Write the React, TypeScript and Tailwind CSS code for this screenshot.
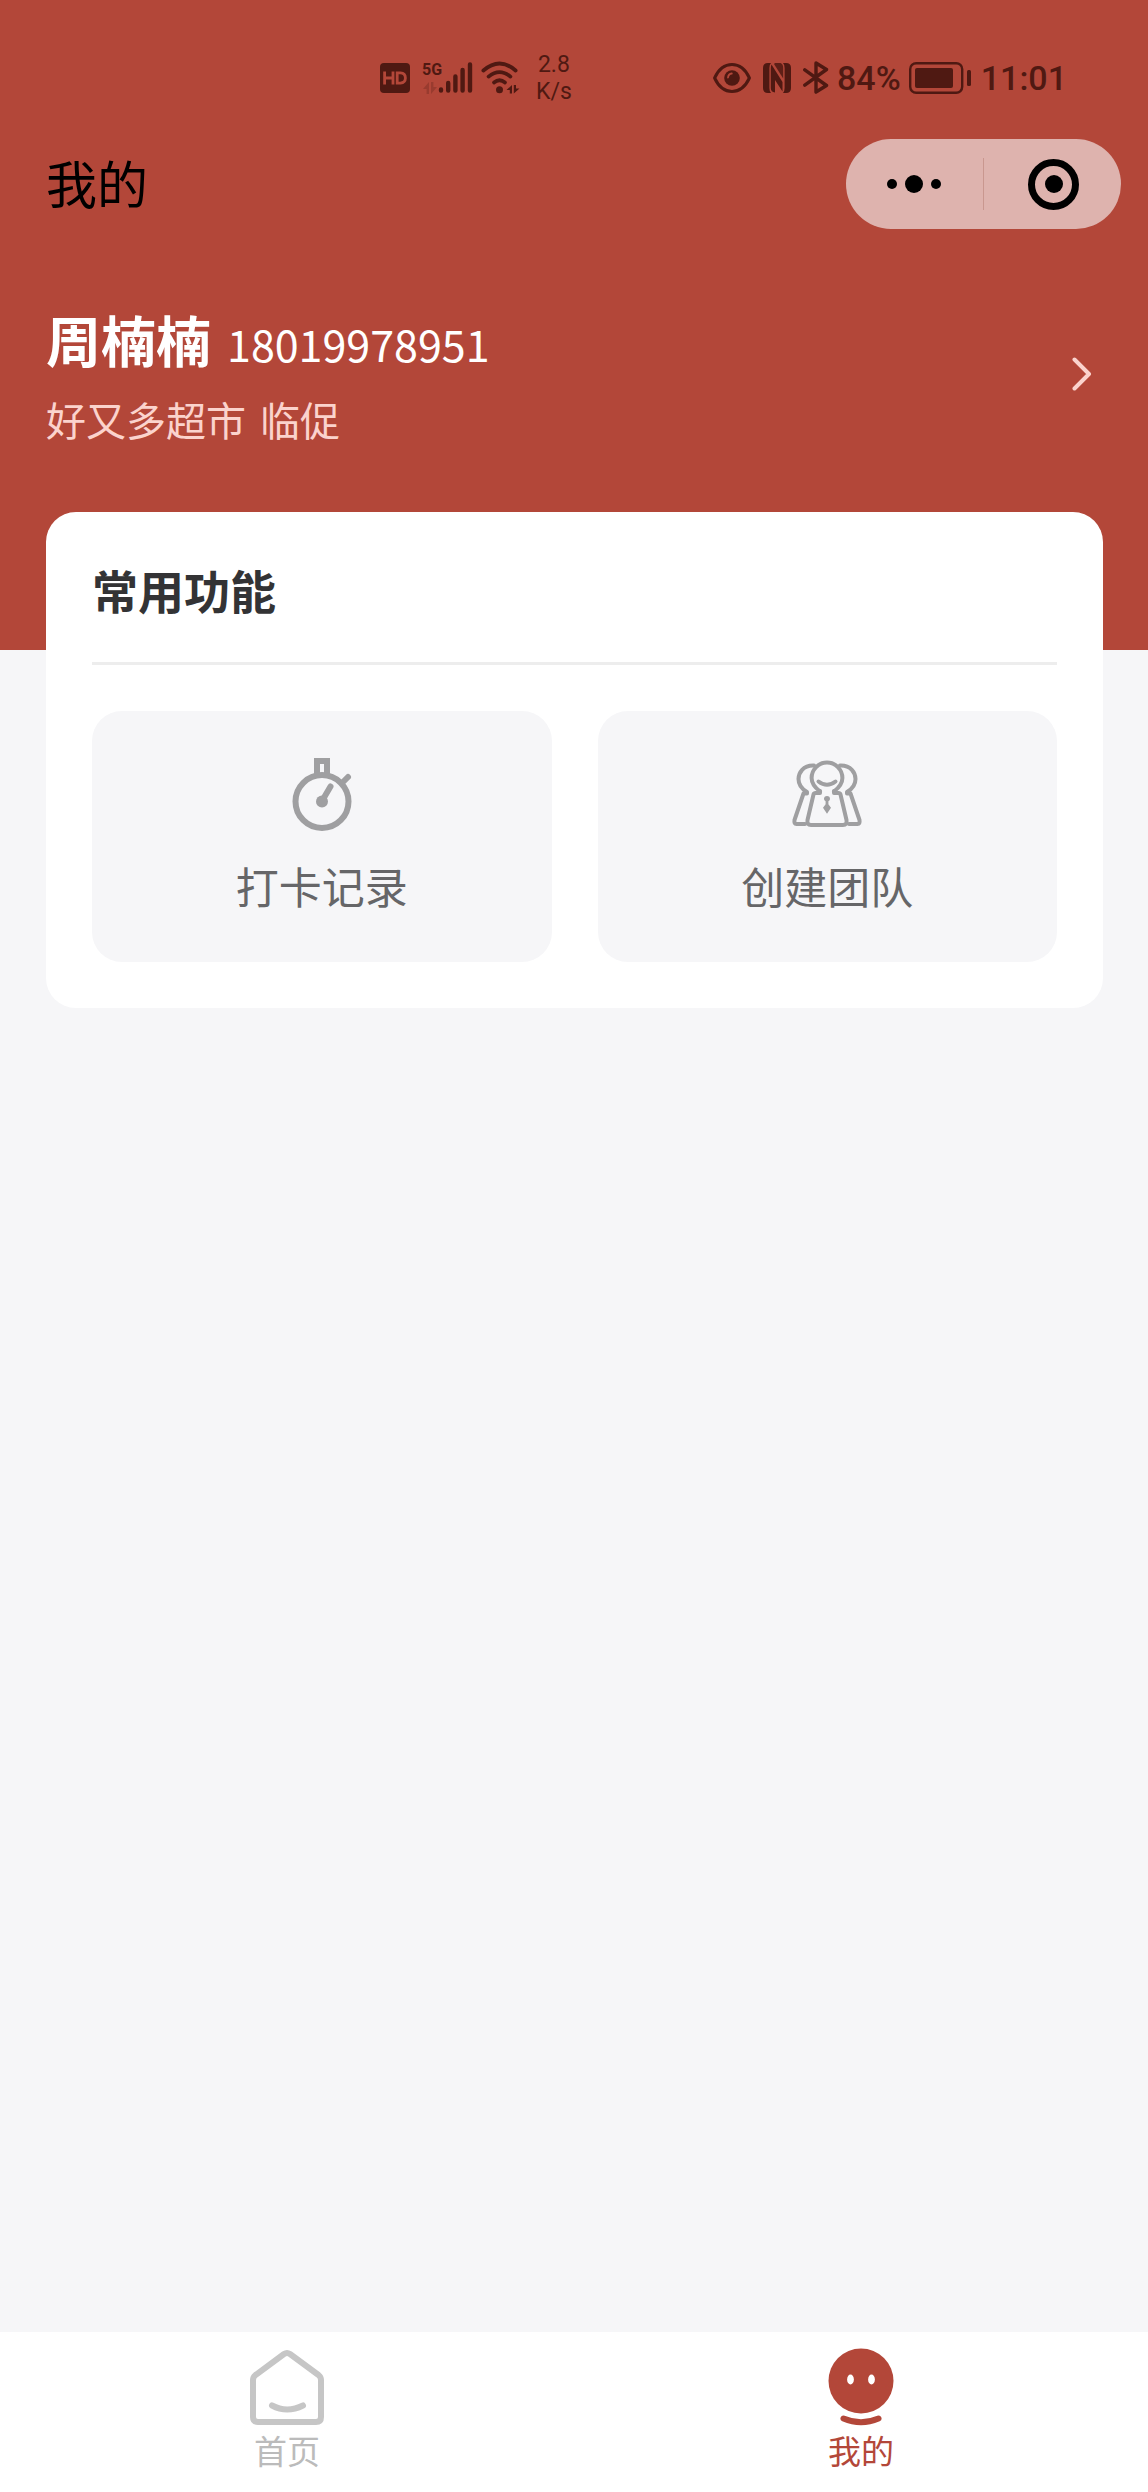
import { FC, ReactNode } from 'react';

type IconProps = { className?: string };

const HdIcon: FC = () => (
  <svg className="h-[30px] w-[30px]" viewBox="0 0 30 30" aria-hidden="true">
    <rect width="30" height="30" rx="4" fill="currentColor" />
    <g fill="none" stroke="#b34739" strokeWidth="2.8">
      <path d="M4.6 8.5v13M13 8.5v13M4.6 15H13" />
      <path d="M17.2 9.9v10.2h3.2q5-.4 5-5.1t-5-5.1z" />
    </g>
  </svg>
);

const SignalIcon: FC = () => (
  <svg className="h-[33px] w-[35px]" viewBox="0 0 35 33" aria-hidden="true">
    <g stroke="currentColor" strokeWidth="4.4" strokeLinecap="round">
      <path d="M3 29.5v-1M10.2 29.5v-7.5M17.4 29.5v-14M24.6 29.5v-20.5M32 29.5v-26" />
    </g>
  </svg>
);

const DataArrows: FC<IconProps> = ({ className }) => (
  <svg className={className} viewBox="0 0 14 12" fill="currentColor" aria-hidden="true">
    <path d="M6 0v12H3.6V7H0z" />
    <path d="M8 12V0h2.4v5H14z" />
  </svg>
);

const WifiIcon: FC = () => (
  <svg className="h-[33px] w-[39px]" viewBox="0 0 39 33" aria-hidden="true">
    <g fill="none" stroke="currentColor" strokeWidth="3.8" strokeLinecap="round">
      <path d="M2.4 9.5Q18.5-4.6 34.6 9.5" />
      <path d="M7.6 15.6Q18.5 6.6 29.4 15.6" />
      <path d="M13 21.4Q18.5 17.2 24 21.4" />
    </g>
    <circle cx="18.5" cy="28.8" r="3.5" fill="currentColor" />
    <path d="M31 24v8.5h-2.2V29h-3.3zM32.8 32.5V24H35v3.5h3.5z" fill="currentColor" />
  </svg>
);

const EyeIcon: FC = () => (
  <svg className="h-[30px] w-[38px]" viewBox="0 0 38 30" aria-hidden="true">
    <path
      d="M1.6 15C5.5 6.5 11.5 1.6 19 1.6S32.5 6.5 36.4 15C32.5 23.5 26.5 28.4 19 28.4S5.5 23.5 1.6 15z"
      fill="none"
      stroke="currentColor"
      strokeWidth="3"
      strokeLinejoin="round"
    />
    <circle cx="19" cy="15" r="7.8" fill="currentColor" />
    <path d="M15 14.5q.3-3.6 3.8-4" fill="none" stroke="#b34739" strokeWidth="1.8" strokeLinecap="round" />
  </svg>
);

const NfcIcon: FC = () => (
  <svg className="h-[30px] w-[28px]" viewBox="0 0 28 30" fill="currentColor" aria-hidden="true">
    <path d="M5 0Q0 0 0 5v20q0 5 5 5h3Q6.400 28.500 6.400 25V5Q6.400 1.500 8 0z" />
    <path d="M8.500 1.500L19.500 19v9.500L12 17v12.500Q7.800 29 7.800 25V5q0-2 .7-3.500z" />
    <path d="M23 30q5 0 5-5V5q0-5-5-5h-3q1.600 1.500 1.600 5v20q0 3.500-1.600 5z" />
    <path d="M12 0h5.500q2.700 1 2.700 5v10.500L11 1z" opacity=".85" />
  </svg>
);

const BluetoothIcon: FC = () => (
  <svg className="h-[33px] w-[26px]" viewBox="0 0 26 33" aria-hidden="true">
    <path
      d="M1.8 8.8L23.5 24.5 13 31V2l10.500 6.5L1.8 24.2"
      fill="none"
      stroke="currentColor"
      strokeWidth="3.4"
      strokeLinecap="round"
      strokeLinejoin="round"
    />
  </svg>
);

const BatteryIcon: FC = () => (
  <svg className="h-[32px] w-[62px]" viewBox="0 0 62 32" aria-hidden="true">
    <rect x="1.2" y="1.2" width="52" height="29.6" rx="6" fill="none" stroke="currentColor" strokeWidth="2.4" />
    <rect x="6" y="6" width="38" height="20" rx="2" fill="currentColor" />
    <rect x="58" y="8" width="4" height="16" rx="1.5" fill="currentColor" />
  </svg>
);

const StopwatchIcon: FC = () => (
  <svg className="h-[76px] w-[76px]" viewBox="0 0 76 76" aria-hidden="true">
    <g fill="none" stroke="#9f9fa1" strokeWidth="6">
      <circle cx="38" cy="44.5" r="26.5" />
      <path d="M33 18V4h10v14" />
      <path d="M59 25l5-5" strokeLinecap="round" />
      <path d="M38 44l8.500-14.500" strokeLinecap="round" />
    </g>
    <circle cx="38" cy="44.5" r="6" fill="#9f9fa1" />
  </svg>
);

const TeamIcon: FC = () => (
  <svg className="h-[76px] w-[76px]" viewBox="0 0 76 76" aria-hidden="true">
    <g fill="none" stroke="#9f9fa1" strokeWidth="4" strokeLinecap="round" strokeLinejoin="round">
      <path d="M31 34.500C24.500 29.500 22.600 25 22.600 21a15.400 15.400 0 0 1 30.800 0c0 4-1.900 8.500-8.400 13.500" />
      <path d="M31 34v2h-4.500q-1.500 0-2 1.500L18.500 63q-.8 5 3.500 5h32q4.300 0 3.500-5L51.500 37.500q-.5-1.500-2-1.500H45v-2" />
      <path d="M29.500 24.500q8.500 6.600 17 0" />
      <path d="M25 8.500C14 8 9.500 16 9.500 22c0 5 2.500 9.500 8.500 13v1.500h-3.500L5.500 63q-.6 4 2 4H16" />
      <path d="M51 8.500C62 8 66.500 16 66.500 22c0 5-2.500 9.500-8.500 13v1.500h3.500L70.500 63q.6 4-2 4H60" />
    </g>
    <path
      d="M38 39a3 3 0 0 1 3 3q0 1.500-1.600 2.300v3l2.600 3.500-4 6-4-6 2.600-3.500v-3Q35 43.500 35 42a3 3 0 0 1 3-3z"
      fill="#9f9fa1"
    />
  </svg>
);

const HomeIcon: FC = () => (
  <svg className="h-[78px] w-[78px]" viewBox="0 0 78 78" aria-hidden="true">
    <g fill="none" stroke="#c6c6c6" strokeWidth="6" strokeLinecap="round" strokeLinejoin="round">
      <path d="M36 6q3-2 6 0L70.500 27q2.500 2 2.500 5v37q0 5-5 5H10q-5 0-5-5V32q0-3 2.500-5z" />
      <path d="M24 57.500q15 8 31 0" />
    </g>
  </svg>
);

const FaceIcon: FC = () => (
  <svg className="h-[78px] w-[78px]" viewBox="0 0 78 78" aria-hidden="true">
    <circle cx="39" cy="33" r="32.5" fill="#b34739" />
    <ellipse cx="28.5" cy="31.5" rx="3.4" ry="5" fill="#fff" />
    <ellipse cx="49.5" cy="31.5" rx="3.4" ry="5" fill="#fff" />
    <path d="M21.500 70.500q17.500 7.500 35 0" fill="none" stroke="#b34739" strokeWidth="6" strokeLinecap="round" />
  </svg>
);

const StatusBar: FC = () => (
  <div className="flex h-[139px] items-center justify-between pt-4 pr-[81px] pl-[380px] font-[Roboto,sans-serif] text-[#4f1912]">
    <div className="flex items-center">
      <HdIcon />
      <div className="ml-3 flex w-4 flex-col gap-1">
        <span className="text-[16px] leading-4 font-bold">5G</span>
        <DataArrows className="h-3 w-4 opacity-25" />
      </div>
      <SignalIcon />
      <div className="ml-2">
        <WifiIcon />
      </div>
      <div className="ml-4 text-center text-[23px] leading-[27px]">
        <div>2.8</div>
        <div>K/s</div>
      </div>
    </div>
    <div className="flex items-center">
      <EyeIcon />
      <div className="ml-3">
        <NfcIcon />
      </div>
      <div className="mr-2 ml-3">
        <BluetoothIcon />
      </div>
      <span className="mr-2 text-[34px] leading-10 font-medium">84%</span>
      <BatteryIcon />
      <span className="ml-2.5 text-[34px] leading-10 font-medium">11:01</span>
    </div>
  </div>
);

const NavBar: FC = () => (
  <div className="flex items-center justify-between pr-[27px] pl-[46px]">
    <h1 className="pb-1 text-[51px] leading-[70px] text-black">我的</h1>
    <div className="flex h-[90px] w-[275px] items-center rounded-full bg-[#deb3ae]">
      <button className="flex h-full flex-1 items-center justify-center gap-2 pr-0.5" type="button" aria-label="更多">
        <span className="h-2.5 w-2.5 rounded-full bg-black" />
        <span className="h-[18px] w-[18px] rounded-full bg-black" />
        <span className="h-2.5 w-2.5 rounded-full bg-black" />
      </button>
      <span className="h-[52px] w-px bg-[#c9978f]" />
      <button className="flex h-full flex-1 items-center justify-center pl-0.5" type="button" aria-label="关闭">
        <span className="flex h-[51px] w-[51px] items-center justify-center rounded-full border-[7px] border-black">
          <span className="h-[18px] w-[18px] rounded-full bg-black" />
        </span>
      </button>
    </div>
  </div>
);

const Profile: FC = () => (
  <a className="mt-[74px] flex items-center justify-between pr-[56px] pl-[46px]" href="#profile">
    <div>
      <div className="flex items-baseline gap-4 leading-[70px] text-white">
        <span className="text-[55px] font-bold">周楠楠</span>
        <span className="text-[43px]">18019978951</span>
      </div>
      <div className="mt-4 flex gap-3.5 text-[40px] leading-[50px] text-[#fbd3cd]">
        <span>好又多超市</span>
        <span>临促</span>
      </div>
    </div>
    <svg className="h-[34px] w-5" viewBox="0 0 20 34" aria-hidden="true">
      <path
        d="M2.500 2.500L17 17 2.500 31.500"
        fill="none"
        stroke="#fbd3cd"
        strokeWidth="4"
        strokeLinecap="round"
        strokeLinejoin="round"
      />
    </svg>
  </a>
);

const features: { title: string; icon: ReactNode }[] = [
  { title: '打卡记录', icon: <StopwatchIcon /> },
  { title: '创建团队', icon: <TeamIcon /> },
];

const Features: FC = () => (
  <section className="-mt-[138px] mr-[45px] ml-[46px] rounded-[30px] bg-white px-[46px] pb-[46px]">
    <h2 className="border-b-[3px] border-[#ededed] pt-[44px] pb-10 text-[46px] leading-[66px] font-bold text-[#333335]">
      常用功能
    </h2>
    <div className="mt-[46px] grid grid-cols-2 gap-[46px]">
      {features.map((item) => (
        <button
          key={item.title}
          className="flex flex-col items-center rounded-[30px] bg-[#f6f6f8] pt-[46px] pb-[47px] text-[43px] leading-[60px] text-[#666668]"
          type="button"
        >
          {item.icon}
          <span className="mt-[22px]">{item.title}</span>
        </button>
      ))}
    </div>
  </section>
);

const TabBar: FC = () => (
  <nav className="mt-auto grid grid-cols-2 bg-white pt-4 pb-[18px] text-[33px] leading-[48px]">
    <a className="flex flex-col items-center text-[#bbbbbb]" href="#home">
      <HomeIcon />
      <span>首页</span>
    </a>
    <a className="flex flex-col items-center text-[#b34739]" href="#mine" aria-current="page">
      <FaceIcon />
      <span>我的</span>
    </a>
  </nav>
);

export default function App() {
  return (
    <div className="flex min-h-screen flex-col bg-[#f6f6f8] font-['Noto_Sans_CJK_SC',sans-serif]">
      <header className="bg-[#b34739] pb-[206px]">
        <StatusBar />
        <NavBar />
        <Profile />
      </header>
      <Features />
      <TabBar />
    </div>
  );
}
